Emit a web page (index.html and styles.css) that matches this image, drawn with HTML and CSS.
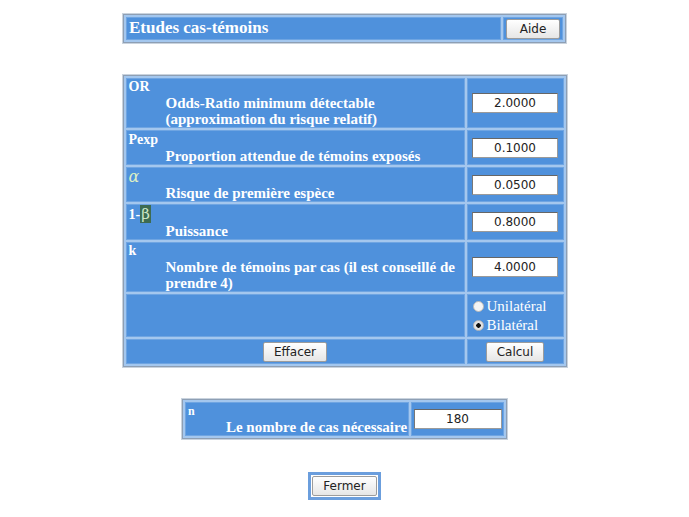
FILE: index.html
```html
<!DOCTYPE html>
<html>
	<head>
		<meta charset="utf-8">
		<title>Etudes cas-témoins</title>
		<link rel="stylesheet" href="styles.css">
	</head>
	<body>
	<div class="page">
		<table class="bar">
			<tr>
				<td class="title">Etudes cas-témoins</td>
				<td class="help"><button class="btn">Aide</button></td>
			</tr>
		</table>

		<table class="form">
			<tr class="r-or">
				<td class="label"><div class="sym">OR</div><div class="desc">Odds-Ratio minimum détectable<br>(approximation du risque relatif)</div></td>
				<td class="field"><input type="text" value="2.0000"></td>
			</tr>
			<tr class="r-pexp">
				<td class="label"><div class="sym">Pexp</div><div class="desc">Proportion attendue de témoins exposés</div></td>
				<td class="field"><input type="text" value="0.1000"></td>
			</tr>
			<tr class="r-alpha">
				<td class="label"><div class="sym greek">α</div><div class="desc">Risque de première espèce</div></td>
				<td class="field"><input type="text" value="0.0500"></td>
			</tr>
			<tr class="r-beta">
				<td class="label"><div class="sym">1-<span class="beta">β</span></div><div class="desc">Puissance</div></td>
				<td class="field"><input type="text" value="0.8000"></td>
			</tr>
			<tr class="r-k">
				<td class="label"><div class="sym">k</div><div class="desc">Nombre de témoins par cas (il est conseillé de<br>prendre 4)</div></td>
				<td class="field"><input type="text" value="4.0000"></td>
			</tr>
			<tr class="r-side">
				<td class="label"></td>
				<td class="radios">
					<label><input type="radio" name="side"> Unilatéral</label>
					<label><input type="radio" name="side" checked> Bilatéral</label>
				</td>
			</tr>
			<tr class="r-btn">
				<td class="center"><button class="btn">Effacer</button></td>
				<td class="center"><button class="btn">Calcul</button></td>
			</tr>
		</table>

		<table class="result">
			<tr>
				<td class="label"><div class="sym">n</div><div class="desc">Le nombre de cas nécessaire</div></td>
				<td class="field"><input type="text" value="180"></td>
			</tr>
		</table>

		<div class="ring"><button class="btn close">Fermer</button></div>
	</div>
	</body>
</html>
```

FILE: styles.css
```css
body{margin:0; background:#fff; font-family:"Liberation Serif", serif;}
.page{display:flex; flex-direction:column; align-items:center; padding:14px 0 18px;}

table{border-collapse:separate; border-spacing:2px; background:#a4c7ee; border:1px solid #8e9fb4; box-shadow:0 0 0 1px #c9d3de;}
td{background:#4f91dc; border:1px solid #6fa5e2; padding:0; color:#fff; font-weight:bold; font-size:15px; line-height:16px;}

.bar{width:443px;}
.bar .title{font-size:17px; padding:0 2px 1px 2px; height:20px;}
.bar .help{width:58px; text-align:center;}

.form{width:444px; margin-top:32px;}
.form .field, .form .radios{width:91px;}
.sym{padding-left:2px; font-size:14px;}
.desc{padding-left:39px;}
.greek{font-family:"DejaVu Serif", serif; font-weight:normal; font-style:italic; color:#dcefc4; font-size:16px;}
.beta{font-family:"DejaVu Serif", serif; font-weight:normal; background:#3d6b52; color:#cfe8c8; padding:0 1px; font-size:15px;}

.r-pexp .label, .r-alpha .label{height:33px;}
.r-beta .label{height:34px;}

.field{text-align:center;}
.field input{width:78px; height:16px; padding:1px 3px; border:1px solid #9a9a9a; border-top-color:#666; border-left-color:#777; font-family:"DejaVu Sans", sans-serif; font-size:12px; text-align:center; color:#222;}

.radios{font-weight:normal; font-size:15px; line-height:19px; padding:2px 0 1px 4px;}
.radios label{display:flex; align-items:center;}
.radios input{appearance:none; margin:0 3px 0 1px; width:11px; height:11px; border-radius:50%; background:#f4f4f4; border:1px solid #b8b8b8;}
.radios input:checked{background:radial-gradient(circle, #111 0 2px, #e2e2e2 2.5px);}

.center{text-align:center; height:23px;}

.btn{font-family:"DejaVu Sans", sans-serif; font-size:12px; color:#222; background:linear-gradient(#ffffff, #e6e6e6); border:1px solid #9c9c9c; border-radius:2px; height:20px; padding:0 10px;}
.help .btn{width:54px;}

.result{margin-top:32px;}
.result .label{padding-right:1px;}
.result .sym{font-size:12px;}
.result .desc{padding-left:40px;}
.result .field{width:91px;}
.result .field input{width:80px;}

.ring{margin-top:33px; display:flex; padding:1px; border:3px solid #6b9edd; background:#fff;}
.close{margin:0;}
```
